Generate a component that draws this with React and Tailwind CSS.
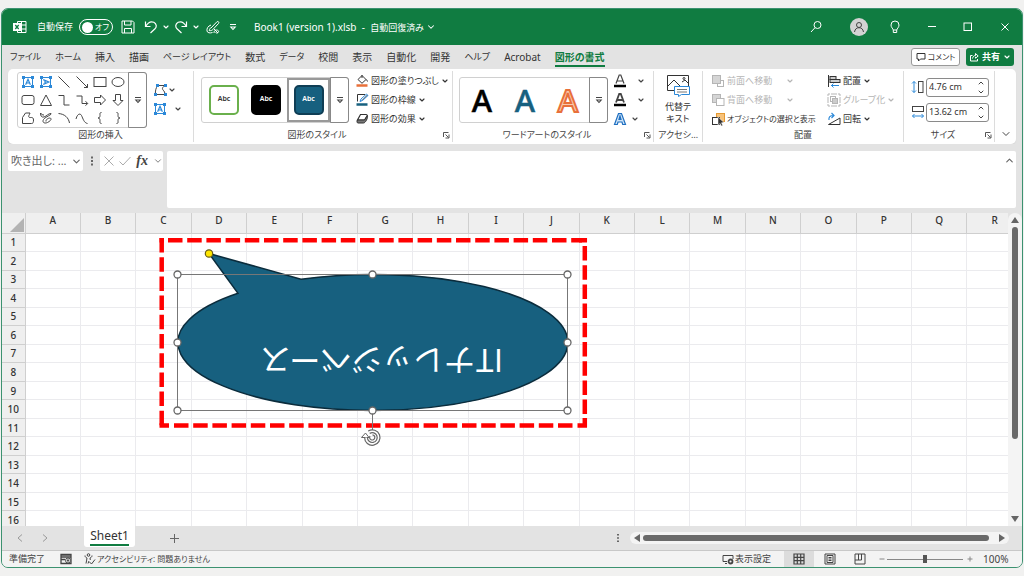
import React from "react";
import { ChevronDown, ChevronUp } from "lucide-react";

const COLS = "ABCDEFGHIJKLMNOPQR".split("");
const ROWS = Array.from({ length: 16 }, (_, i) => i + 1);

function Svg({ w = 14, h = 14, children, label }) {
  return (
    <svg width={w} height={h} viewBox={`0 0 ${w} ${h}`} fill="none" stroke="currentColor" strokeWidth="1" className="shrink-0" aria-label={label} aria-hidden={label ? undefined : true}>
      {children}
    </svg>
  );
}

const Chev = ({ className = "" }) => <ChevronDown size={8} strokeWidth={3.5} className={`shrink-0 ${className}`} />;

function MoreMark() {
  return (
    <Svg w={8} h={8}>
      <path d="M1 1.500h6M1.800 4h4.400L4 6.500z" strokeWidth="1.100" />
    </Svg>
  );
}

function Launcher() {
  return (
    <button aria-label="詳細設定" className="flex h-3 w-3 items-center justify-center text-[#555]">
      <Svg w={8} h={8}>
        <path d="M1.500 6V1.500H6.500M3.500 3.500l3 3M7 3.500V7H3.500" />
      </Svg>
    </button>
  );
}

/* ---------- title bar ---------- */

function TitleBar() {
  return (
    <header className="flex h-9 shrink-0 items-center bg-[#107c41] pl-[11px] text-[10px] text-white">
      <Svg w={14} h={14} label="Excel">
        <path d="M4.500 3.500v-2h8.500v11h-8.500v-2M8.500 1.500v11M8.500 5h4.500M8.500 9h4.500" />
        <rect x="0.500" y="3.500" width="7" height="7" fill="#fff" stroke="#fff" />
        <path d="M2.300 5l3.400 4M5.700 5L2.300 9" stroke="#107c41" strokeWidth="1.300" />
      </Svg>
      <label className="ml-[10px] flex items-center gap-1">
        <span className="w-[38px] whitespace-nowrap text-[9px]">自動保存</span>
        <span className="relative flex h-4 w-[34px] items-center rounded-full border border-white px-[2px]">
          <input type="checkbox" role="switch" className="absolute inset-0 h-full w-full cursor-pointer appearance-none" />
          <span className="h-[11px] w-[11px] shrink-0 rounded-full bg-white" />
          <span className="ml-[2px] text-[8px] whitespace-nowrap">オフ</span>
        </span>
      </label>
      <button aria-label="上書き保存" className="ml-2">
        <Svg>
          <path d="M1 1h10.500l1.500 1.500V13H1zM3.500 1v4h6.500V1M3.500 13V8.500h7V13" />
        </Svg>
      </button>
      <button aria-label="元に戻す" className="ml-[9px] flex items-center gap-1">
        <Svg>
          <path d="M1.500 1.500v5h5M1.800 6.200C4 2.500 7 1 9.800 2.300c3 1.500 3 4.700 1.200 6.500L6.500 13" strokeWidth="1.200" />
        </Svg>
        <Chev />
      </button>
      <button aria-label="やり直し" className="ml-1 flex items-center gap-1">
        <Svg>
          <path d="M12.500 1.500v5h-5M12.200 6.200C10 2.500 7 1 4.200 2.300c-3 1.500-3 4.700-1.200 6.500L7.500 13" strokeWidth="1.200" />
        </Svg>
        <Chev />
      </button>
      <button aria-label="インク" className="ml-[6px]">
        <Svg>
          <path d="M5 8l6-6.300c1-.8 2.500.6 1.600 1.700L6.800 9.600M5 8c-1.200.2-1.500 1.200-1.800 2.600 1.500.2 3-.1 3.600-1M5 5C2 6 .5 8.500 1 11c.4 2 3 2.300 5.500 1.500M8 9l4 4M8 13c0-2 1-3 2.500-3s2.500 1 2 2-2 1.500-3 .5" />
        </Svg>
      </button>
      <button aria-label="クイック アクセスのカスタマイズ" className="ml-[9px]">
        <MoreMark />
      </button>
      <button className="ml-[17px] flex items-center whitespace-nowrap text-[10px]">
        <span>Book1 (version 1).xlsb&nbsp; -&nbsp; <span className="text-[9px]">自動回復済み</span></span>
        <ChevronDown size={10} strokeWidth={2.5} className="ml-[2px]" />
      </button>
      <div className="ml-auto flex items-center">
        <button aria-label="検索">
          <Svg>
            <circle cx="8.500" cy="5" r="3.500" />
            <path d="M6 7.700L2 12" />
          </Svg>
        </button>
        <button aria-label="アカウント" className="ml-[27px] flex h-[18px] w-[18px] items-center justify-center rounded-full bg-[#d3d3d3] text-[#444]">
          <Svg w={12} h={12}>
            <circle cx="6" cy="4" r="2.500" />
            <path d="M1.500 11c.5-3 2.200-4.300 4.500-4.300s4 1.300 4.500 4.300" />
          </Svg>
        </button>
        <button aria-label="ヒント" className="ml-5">
          <Svg>
            <path d="M5.300 10C5 8.500 3 7.500 3 5a4 4 0 0 1 8 0c0 2.500-2 3.500-2.300 5zM5.300 10v2.500h3.400V10" />
          </Svg>
        </button>
        <button aria-label="最小化" className="ml-[23px]">
          <Svg><path d="M3 6.500h8" /></Svg>
        </button>
        <button aria-label="最大化" className="ml-[22px]">
          <Svg><rect x="3" y="3" width="7.500" height="7.500" /></Svg>
        </button>
        <button aria-label="閉じる" className="mr-[10px] ml-[23px]">
          <Svg><path d="M3.500 3.500l7 7M10.500 3.500l-7 7" /></Svg>
        </button>
      </div>
    </header>
  );
}

/* ---------- ribbon tabs ---------- */

const KANA_TAB = "text-[9px]";
const KANJI_TAB = "text-[10px]";
const TABS = [
  ["ファイル", KANA_TAB],
  ["ホーム", KANA_TAB],
  ["挿入", KANJI_TAB],
  ["描画", KANJI_TAB],
  ["ページ レイアウト", KANA_TAB],
  ["数式", KANJI_TAB],
  ["データ", KANA_TAB],
  ["校閲", KANJI_TAB],
  ["表示", KANJI_TAB],
  ["自動化", KANJI_TAB],
  ["開発", KANJI_TAB],
  ["ヘルプ", KANA_TAB],
  ["Acrobat", KANJI_TAB],
];

function Tabs() {
  return (
    <nav className="flex h-6 shrink-0 items-center bg-[#e3e3e3] pr-2 pl-2 text-[10px] text-[#333]">
      <div className="flex items-center gap-[14px]">
        {TABS.map(([name, size]) => (
          <button key={name} className={`leading-4 whitespace-nowrap ${size}`}>{name}</button>
        ))}
        <button className="mt-[2px] border-b-2 border-[#107c41] leading-4 font-bold whitespace-nowrap text-[#107c41]">図形の書式</button>
      </div>
      <button className="ml-auto flex h-[18px] w-[49px] items-center justify-center gap-[2px] rounded-[3px] border border-[#999] bg-white text-[8px] whitespace-nowrap">
        <Svg w={10} h={10}>
          <path d="M1 1.500h8v5.500H4.500L2.500 9V7H1z" />
        </Svg>
        コメント
      </button>
      <button className="ml-[6px] flex h-[18px] w-12 items-center justify-center gap-[3px] rounded-[3px] bg-[#107c41] text-[9px] font-bold whitespace-nowrap text-white">
        <Svg w={10} h={10}>
          <path d="M3.500 3.500H1.500V9h7V7M3.500 6.500C4 4.500 5 3.500 6.500 3.500V1.500L9.200 4 6.500 6.200V4.800" />
        </Svg>
        共有
        <Chev />
      </button>
    </nav>
  );
}

/* ---------- ribbon ---------- */

function Group({ label, launcher, className, children }) {
  return (
    <section className={`flex shrink-0 flex-col border-r border-[#dcdcdc] ${className}`}>
      <div className="flex h-[57px] items-center">{children}</div>
      <div className="flex h-[14px] items-center text-[9px] text-[#444]">
        <span className="flex-1 text-center whitespace-nowrap">{label}</span>
        {launcher && <Launcher />}
      </div>
    </section>
  );
}

const BLUE = "#2b88d8";

const textBox = (turn) => (
  <>
    <rect x="2.500" y="2.500" width="9" height="9" stroke={BLUE} />
    <g fill={BLUE} stroke="none">
      <rect x="1" y="1" width="3" height="3" />
      <rect x="10" y="1" width="3" height="3" />
      <rect x="1" y="10" width="3" height="3" />
      <rect x="10" y="10" width="3" height="3" />
    </g>
    <path d="M4.600 9.800L7 4.200l2.400 5.600M5.500 8h3" stroke={BLUE} strokeWidth="1.200" transform={turn ? "rotate(90 7 7)" : undefined} />
  </>
);

const SHAPES = [
  ["テキスト ボックス", textBox(false)],
  ["縦書きテキスト ボックス", textBox(true)],
  ["直線", <path d="M1.500 1.500l11 11" />],
  ["矢印", <path d="M1.500 1.500l11 11M12.500 9v3.500H9" />],
  ["正方形", <rect x="1" y="2.500" width="12" height="9" />],
  ["楕円", <ellipse cx="7" cy="7" rx="6" ry="4.500" />],
  ["角丸四角形", <rect x="1" y="2.500" width="12" height="9" rx="2" />],
  ["三角形", <path d="M7 2L12.500 12.500H1.500z" />],
  ["カギ線", <path d="M1.500 2.500H7v9.500h5.500" />],
  ["カギ線矢印", <path d="M1.500 3H7v7.500h5.500M10.500 8.200l2.200 2.300-2.200 2.200" />],
  ["右矢印", <path d="M1.500 4.500h6V2l5 5-5 5V9.500h-6z" />],
  ["下矢印", <path d="M4.500 1.500v6H2l5 5 5-5H9.500v-6z" />],
  ["フリーフォーム", <path d="M1.500 12.500V6.500L4.500 2h4.500c-.5 2-2 3-1 4.200C9 7.300 12.500 5 12.500 9c0 2.500-.5 3.500-2 3.500z" />],
  ["フリーハンド", <path d="M1.500 2c0 3 1 4.500 3.500 4C8 5 9 2.500 12 2.500c1.500 1-6 3.500-7.500 6-1.500 2.500.5 4.500 4 3 3-1.500 4.500-3.500 3-4.300S6.500 8.500 7 10.500M1.500 2c1 1.500 2 2 3.500 2" />],
  ["円弧", <path d="M1.500 2.500c6 .5 10 4 11 9.500" />],
  ["曲線", <path d="M1 8C2 3.500 5 1.500 6.500 4.500c1.500 3 2.500 7.500 6 8" />],
  ["左中かっこ", <path d="M8.500 1.500C6.500 1.500 7 3 7 4.500S6.500 7 5 7c1.500 0 2 1 2 2.500S6.500 12.500 8.500 12.500" />],
  ["右中かっこ", <path d="M5.500 1.500C7.500 1.500 7 3 7 4.500S7.500 7 9 7C7.500 7 7 8 7 9.500S7.500 12.500 5.500 12.500" />],
];

function GalleryMore({ className = "" }) {
  return (
    <button aria-label="その他" className={`flex w-[19px] shrink-0 items-center justify-center self-stretch rounded-r-[3px] border border-[#888] ${className}`}>
      <MoreMark />
    </button>
  );
}

function StyleTile({ label, className }) {
  return (
    <button className={`flex h-[30px] w-[30px] items-center justify-center rounded-[5px] border-2 text-[7px] font-semibold ${className}`}>{label}</button>
  );
}

function Command({ icon, children, disabled, chevron = true, gap = "ml-[2px]", size = "text-[9px]" }) {
  return (
    <button disabled={disabled} className={`flex h-[19px] items-center whitespace-nowrap text-[#333] disabled:text-[#b5b5b5] ${size}`}>
      {icon}
      <span className="ml-[2px]">{children}</span>
      {chevron && <Chev className={gap} />}
    </button>
  );
}

function SizeField({ icon, label, value }) {
  return (
    <div className="flex items-center gap-[1px]">
      {icon}
      <div className="flex h-[19px] w-[63px] items-center rounded-[3px] border border-[#8a8a8a] bg-white">
        <input aria-label={label} defaultValue={value} className="w-[50px] min-w-0 bg-transparent pl-[2px] text-[9px] text-[#333] outline-none" />
        <span className="flex flex-col gap-[1px]">
          <button aria-label={`${label}を増やす`}><ChevronUp size={8} strokeWidth={3} /></button>
          <button aria-label={`${label}を減らす`}><ChevronDown size={8} strokeWidth={3} /></button>
        </span>
      </div>
    </div>
  );
}

function Ribbon() {
  return (
    <div className="mx-[6px] flex h-[75px] shrink-0 rounded-[5px] bg-white py-[2px] text-[#444] shadow-[0_1px_1px_#d5d5d5]">
      <Group label="図形の挿入" className="w-[186px]">
        <div className="ml-[9px] flex h-14 rounded-[3px] border border-[#d0d0d0]">
          <div className="grid grid-cols-6 pl-[1px]">
            {SHAPES.map(([name, drawing]) => (
              <button key={name} aria-label={name} className="flex h-[18px] w-[18px] items-center justify-center">
                <Svg>{drawing}</Svg>
              </button>
            ))}
          </div>
          <GalleryMore className="-my-[1px] -mr-[1px] ml-[1px]" />
        </div>
        <div className="ml-[6px] flex flex-col gap-[5px]">
          <button aria-label="図形の編集" className="flex items-center gap-[1px]">
            <Svg>
              <path d="M4.500 2.500h8C9 4 8.500 6 11 8l1.500 3.500H2.500C2 8 3 5 4.500 2.500" />
              <g fill={BLUE} stroke="none">
                <rect x="3" y="1" width="3" height="3" />
                <rect x="11" y="1" width="3" height="3" />
                <rect x="1" y="10" width="3" height="3" />
                <rect x="11" y="10" width="3" height="3" />
              </g>
            </Svg>
            <Chev />
          </button>
          <button aria-label="テキスト ボックスの描画" className="flex items-center gap-[7px]">
            <Svg>{textBox(false)}</Svg>
            <Chev />
          </button>
        </div>
      </Group>

      <Group label="図形のスタイル" launcher className="w-[259px]">
        <div className="ml-[7px] flex h-[46px] items-center rounded-[3px] border border-[#d0d0d0] pl-[7px]">
          <StyleTile label="Abc" className="border-[#6ab04c] bg-white text-[#333]" />
          <StyleTile label="Abc" className="ml-3 border-black bg-black text-white" />
          <span className="ml-[6px] flex h-11 w-[43px] items-center justify-center border-2 border-[#999]">
            <StyleTile label="Abc" className="border-[#0f3e55] bg-[#17607f] text-white" />
          </span>
          <GalleryMore className="-my-[1px] -mr-[1px]" />
        </div>
        <div className="ml-[6px] flex flex-col items-start">
          <Command
            icon={
              <Svg>
                <path d="M3 5.500L7 1.500l4 4-4 3.800zM7 1v3M11.500 5.500l1 2" />
                <path d="M1.500 11.500h11" stroke="#e8703a" strokeWidth="2.500" />
              </Svg>
            }
          >
            図形の塗りつぶし
          </Command>
          <Command
            icon={
              <Svg>
                <path d="M2.500 8.500v-7H10M12.500 2L7 7.500" />
                <path d="M5 8.500l1-2.500 5.500-5 1.500 1.500-5.500 5z" stroke={BLUE} />
                <path d="M1.500 11.500h11" stroke="#17607f" strokeWidth="2.500" />
              </Svg>
            }
          >
            図形の枠線
          </Command>
          <Command
            icon={
              <Svg>
                <path d="M5.500 2.500h5.500c1 0 1.300.8 1 1.500L9.500 8H2.500z" fill="#fff" strokeWidth="1.200" />
                <path d="M2.500 8c-1 1.500-.5 3 .5 3h5.500c2 0 4.500-5 4-7.500L9.500 8z" fill="#777" />
              </Svg>
            }
          >
            図形の効果
          </Command>
        </div>
      </Group>

      <Group label="ワードアートのスタイル" launcher className="w-[201px]">
        <div className="ml-[6px] flex h-[46px] items-center rounded-[3px] border border-[#d0d0d0]">
          {[
            ["黒", "#000", "#000", 0.5],
            ["青", "#17607f", "#17607f", 0.5],
            ["オレンジ", "#f8c9ae", "#e8703a", 2],
          ].map(([name, fill, stroke, width]) => (
            <button key={name} aria-label={name} className="flex h-full w-[43px] items-center justify-center">
              <svg width="40" height="40" viewBox="0 0 40 40">
                <text x="20" y="32" textAnchor="middle" fontSize="31" fontWeight="500" fontFamily="Noto Sans, sans-serif" fill={fill} stroke={stroke} strokeWidth={width}>A</text>
              </svg>
            </button>
          ))}
          <GalleryMore className="-my-[1px] -mr-[1px]" />
        </div>
        <div className="ml-[5px] flex flex-col gap-[5px]">
          {[
            ["文字の塗りつぶし", "#fff", "#444", "#000", "ml-[10px]"],
            ["文字の輪郭", "#ccc", "#444", "#000", "ml-[10px]"],
            ["文字の効果", "#cfe4f7", "#1f6fc0", "none", "ml-1"],
          ].map(([name, fill, stroke, bar, gap]) => (
            <button key={name} aria-label={name} className="flex items-center">
              <Svg>
                <path d={bar === "none" ? "M1.500 12.500L5.500 1.500h3L12.500 12.500h-2.800L9 10H5l-.7 2.500zM6 7.500h2L7 4z" : "M3 9.500L6.200 1h1.600L11 9.500M4.300 7h5.400"} fill={bar === "none" ? fill : "none"} stroke={stroke} strokeWidth={fill === "#ccc" ? 1.8 : 1.2} />
                {bar !== "none" && <path d="M1 12h12" stroke={bar} strokeWidth="2.500" />}
              </Svg>
              <Chev className={gap} />
            </button>
          ))}
        </div>
      </Group>

      <Group label="アクセシ…" className="w-[49px]">
        <button className="flex w-full flex-col items-center text-[9px] leading-3 text-[#333]">
          <Svg w={24} h={23}>
            <path d="M13 16.500H1.500v-15h21V13M2 12l6-6 6 6M16 8l3-2 3 3" />
            <circle cx="18" cy="4.500" r="1" />
            <path d="M8.500 12.500h15v8h-8l-3 2v-2h-4z" fill="#fff" stroke={BLUE} />
            <path d="M11 15.500h10M11 18h10" stroke="#777" />
          </Svg>
          <span className="mt-1">代替テ<br />キスト</span>
        </button>
      </Group>

      <Group label="配置" className="w-[201px]">
        <div className="ml-2 flex w-[116px] flex-col items-start">
          <Command disabled gap="ml-[14px]" icon={<Svg><rect x="6.500" y="6.500" width="6" height="6" /><rect x="1.500" y="1.500" width="8" height="8" fill="#d5d5d5" /></Svg>}>前面へ移動</Command>
          <Command disabled gap="ml-[14px]" icon={<Svg><rect x="1.500" y="1.500" width="8" height="8" fill="#d5d5d5" /><rect x="5.500" y="5.500" width="7.500" height="7" fill="#fff" /></Svg>}>背面へ移動</Command>
          <Command
            chevron={false}
            size="text-[8px]"
            icon={
              <Svg>
                <rect x="5.500" y="1.500" width="8" height="8" fill="#f7c27a" stroke="#e59a33" />
                <rect x="1.500" y="5.500" width="7" height="7" fill="#fff" />
                <path d="M7 5l6 5.500-2.500.3 1.200 2.700-1.400.5-1.200-2.500L7 13z" fill="#333" stroke="#fff" strokeWidth=".5" />
              </Svg>
            }
          >
            オブジェクトの選択と表示
          </Command>
        </div>
        <div className="flex flex-col items-start">
          <Command
            icon={
              <Svg>
                <path d="M1.500 1v12" />
                <rect x="3" y="2.500" width="6" height="3" fill="#ccc" />
                <rect x="3" y="5.500" width="10" height="3" fill="#ccc" />
                <path d="M12 11.500H4M6.500 9.500l-2 2 2 2" stroke={BLUE} />
              </Svg>
            }
          >
            配置
          </Command>
          <Command disabled icon={<Svg><path d="M1 3V1h2M11 1h2v2M13 11v2h-2M3 13H1v-2M4 1h6M4 13h6M1 4v6M13 4v6" /><rect x="3.500" y="3.500" width="5" height="5" /><rect x="5.500" y="5.500" width="5" height="5" fill="#ccc" /></Svg>}>グループ化</Command>
          <Command
            icon={
              <Svg>
                <path d="M1.500 12.500H13V6z" />
                <path d="M2 8C1.500 5 3 3.500 6.500 3.500M4.500 1l2.500 2.500L4.500 6" stroke={BLUE} strokeWidth="1.200" />
              </Svg>
            }
          >
            回転
          </Command>
        </div>
      </Group>

      <Group label="サイズ" launcher className="w-[91px]">
        <div className="ml-[7px] flex flex-col gap-[6px]">
          <SizeField
            label="図形の高さ"
            value="4.76 cm"
            icon={
              <Svg>
                <rect x="7.500" y="1.500" width="4.500" height="11" />
                <path d="M3 1.500v11M1 3.500l2-2 2 2M1 10.500l2 2 2-2" stroke={BLUE} />
              </Svg>
            }
          />
          <SizeField
            label="図形の幅"
            value="13.62 cm"
            icon={
              <Svg>
                <rect x="1.500" y="1.500" width="11" height="5" />
                <path d="M1.500 11h11M3.500 9l-2 2 2 2M10.500 9l2 2-2 2" stroke={BLUE} />
              </Svg>
            }
          />
        </div>
      </Group>
      <div className="flex flex-1 items-end justify-center pb-[2px]">
        <button aria-label="リボンを折りたたむ"><ChevronDown size={12} strokeWidth={2} /></button>
      </div>
    </div>
  );
}

/* ---------- formula bar ---------- */

function FormulaBar() {
  return (
    <div className="flex h-[69px] shrink-0 items-start bg-[#e3e3e3] pt-[7px] pr-[6px] pl-[6px] text-[#666]">
      <div className="flex h-5 w-[75px] items-center rounded-[2px] bg-white">
        <input aria-label="名前ボックス" defaultValue="吹き出し: ..." className="w-[63px] min-w-0 pl-[3px] text-[11px] outline-none" />
        <button aria-label="名前の一覧"><ChevronDown size={11} strokeWidth={2.5} /></button>
      </div>
      <div className="flex h-5 w-[17px] items-center justify-center">
        <Svg w={4} h={12}><path d="M2 1.500v9" strokeWidth="2" strokeDasharray="2 1.500" /></Svg>
      </div>
      <div className="flex h-5 w-[63px] items-center justify-between rounded-[2px] bg-white pl-1">
        <button aria-label="キャンセル" className="text-[#aaa]"><Svg w={10} h={10}><path d="M.5.500l9 9M9.500.500l-9 9" /></Svg></button>
        <button aria-label="入力" className="text-[#aaa]"><Svg w={12} h={10}><path d="M.5 5.500L4 9l7.500-8" /></Svg></button>
        <button aria-label="関数の挿入" className="font-['Liberation_Serif',serif] text-[14px] leading-4 font-bold text-[#444] italic">fx</button>
        <button aria-label="関数の一覧"><ChevronDown size={10} strokeWidth={2} /></button>
      </div>
      <div className="ml-1 flex h-[57px] flex-1 rounded-[2px] bg-white">
        <textarea aria-label="数式バー" className="h-full flex-1 resize-none outline-none" />
        <button aria-label="数式バーの折りたたみ" className="mt-1 mr-[1px] self-start"><ChevronUp size={11} strokeWidth={2.5} /></button>
      </div>
    </div>
  );
}

/* ---------- worksheet ---------- */

const HANDLES = [[177.5, 274.5], [372.5, 274.5], [567.5, 274.5], [177.5, 342.5], [567.5, 342.5], [177.5, 410.5], [372.5, 410.5], [567.5, 410.5]];

function Callout() {
  return (
    <svg className="absolute top-[21px] left-[152px]" width="450" height="220" viewBox="154 234 450 220" role="img" aria-label="吹き出し: 円形">
      <path d="M209 253.500L301 279.200A195 68 0 1 1 238 293.300Z" fill="#17607f" stroke="#0b2c3c" strokeWidth="1.500" />
      <g stroke="#ff0000" strokeWidth="4.500" strokeDasharray="14.500 4.700">
        <path d="M168 240.200H582" />
        <path d="M161.700 238V427" />
        <path d="M584.800 246V414" />
        <path d="M174 425.500H573" />
        <path d="M159.500 425.500H169M159.500 240.200H164M579 240.200H587M584.800 238v4M577.500 425.500H587M584.800 418V427" strokeDasharray="none" />
      </g>
      <text transform="translate(503 349) rotate(180)" fontSize="31" fontFamily="Noto Sans CJK JP, sans-serif" fill="#fff" className="[font-feature-settings:normal]">ITナレッジベース</text>
      <rect x="177.500" y="274.500" width="390" height="136" fill="none" stroke="#777" />
      <path d="M372.500 411v19" stroke="#777" />
      {HANDLES.map(([x, y]) => (
        <circle key={`${x}-${y}`} cx={x} cy={y} r="3.500" fill="#fff" stroke="#666" strokeWidth="1.300" />
      ))}
      <circle cx="209" cy="253.500" r="3.700" fill="#ffe600" stroke="#665c1a" strokeWidth="1.200" />
      <g fill="none">
        <path d="M366 437.500a6.300 6.300 0 1 0 3-5.300" stroke="#666" strokeWidth="4" />
        <path d="M361.500 437.500h7.500l-3.500-4.500z" fill="#fff" stroke="#666" />
        <path d="M366 437.500a6.300 6.300 0 1 0 3-5.300" stroke="#fff" strokeWidth="1.600" />
        <path d="M370 436a2.600 2.600 0 1 0 2.500-1.200" stroke="#666" strokeWidth="1.200" />
      </g>
    </svg>
  );
}

function Sheet() {
  return (
    <div className="flex min-h-0 flex-1 bg-[#e3e3e3]">
      <div className="relative min-w-0 flex-1 overflow-hidden bg-white">
        <table className="h-[317px] w-[1021px] min-w-full table-fixed border-collapse text-[10px] text-[#333]">
          <thead>
            <tr className="h-5 bg-[#efefef]">
              <th aria-label="すべて選択" className="w-[23px] border-r border-b border-[#cfcfcf] p-0 align-bottom">
                <svg width="15" height="15" viewBox="0 0 15 15" className="ml-auto block"><path d="M14 0v14H0z" fill="#b3b3b3" /></svg>
              </th>
              {COLS.map((c) => (
                <th key={c} scope="col" className="border-r border-b border-[#cfcfcf] p-0 pb-[5px] leading-[14px] font-medium">{c}</th>
              ))}
            </tr>
          </thead>
          <tbody>
            {ROWS.map((r) => (
              <tr key={r}>
                <th scope="row" className="border-r border-b border-[#cfcfcf] bg-[#efefef] p-0 leading-[12px] font-medium">{r}</th>
                {COLS.map((c) => (
                  <td key={c} className="border-r border-b border-[#ebebee] p-0" />
                ))}
              </tr>
            ))}
          </tbody>
        </table>
        <Callout />
      </div>
      <div className="flex w-[14px] flex-col items-center rounded-t-full bg-[#f4f4f4] py-1 text-[#666]">
        <button aria-label="上へスクロール"><Svg w={8} h={6}><path d="M4 0l4 6H0z" fill="currentColor" stroke="none" /></Svg></button>
        <div className="mt-1 h-[212px] w-[6px] rounded-full bg-[#6a6a6a]" />
        <button aria-label="下へスクロール" className="mt-auto"><Svg w={8} h={6}><path d="M4 6L0 0h8z" fill="currentColor" stroke="none" /></Svg></button>
      </div>
    </div>
  );
}

/* ---------- footer ---------- */

function SheetTabs() {
  return (
    <div className="flex h-[25px] shrink-0 items-start border-b border-[#c8c8c8] bg-[#e3e3e3] text-[#666]">
      <div className="flex h-6 w-[82px] items-center pl-[15px] text-[#999]">
        <button aria-label="前のシート"><Svg w={6} h={8}><path d="M5 .5L1 4l4 3.500" /></Svg></button>
        <button aria-label="次のシート" className="ml-[19px]"><Svg w={6} h={8}><path d="M1 .5L5 4 1 7.500" /></Svg></button>
      </div>
      <button className="h-[21px] w-[51px] rounded-b-[3px] bg-white px-[6px] text-[#333]">
        <span className="block border-b-2 border-[#107c41] text-[12px] leading-[17px]">Sheet1</span>
      </button>
      <button aria-label="新しいシート" className="ml-[35px] flex h-6 items-center"><Svg w={9} h={9}><path d="M4.500 0v9M0 4.500h9" /></Svg></button>
      <div className="ml-auto flex h-6 items-center">
        <Svg w={4} h={10}><path d="M2 1v8" strokeWidth="2" strokeDasharray="1.500 1.750" /></Svg>
        <div className="mr-[13px] ml-[10px] flex h-3 w-[379px] items-center rounded-full bg-[#f4f4f4] px-1">
          <button aria-label="左へスクロール"><Svg w={6} h={8}><path d="M6 0v8L0 4z" fill="currentColor" stroke="none" /></Svg></button>
          <div className="mr-[10px] ml-[3px] h-[6px] flex-1 rounded-full bg-[#6a6a6a]" />
          <button aria-label="右へスクロール"><Svg w={6} h={8}><path d="M0 0v8l6-4z" fill="currentColor" stroke="none" /></Svg></button>
        </div>
      </div>
    </div>
  );
}

function StatusBar() {
  return (
    <footer className="flex h-4 shrink-0 items-center bg-[#f3f3f3] pl-[7px] text-[9px] whitespace-nowrap text-[#444]">
      <span className="w-[51px]">準備完了</span>
      <Svg w={12} h={12}>
        <path d="M1 2h10M1 4h10M1 1.500h10v9H1zM1 6.500h4" strokeWidth="1.300" />
        <circle cx="8" cy="7.500" r="2.500" fill="#fff" />
        <circle cx="8" cy="7.500" r=".8" fill="#444" />
      </Svg>
      <button className="ml-3 flex items-center gap-[1px] text-[8px]">
        <Svg w={12} h={12}>
          <circle cx="4.500" cy="2" r="1.300" />
          <path d="M1 2.500c0 2 1.500 2 2 2.500 0 2-1 4-1 5.500M8 2.500c0 2-1.500 2-2 2.500l.3 2M4 10.500L5 8M5.500 9l2 2L11 6.500" />
        </Svg>
        アクセシビリティ: 問題ありません
      </button>
      <div className="ml-auto flex h-full items-center">
        <button className="flex items-center gap-[1px]">
          <Svg w={12} h={12}>
            <path d="M5 8.500H1v-6h10V6M3 10.500h2" />
            <circle cx="8.500" cy="8.500" r="2" strokeWidth="1.800" />
          </Svg>
          表示設定
        </button>
        <button aria-label="標準" className="ml-[13px] flex h-full w-[30px] items-center justify-center bg-[#dcdcdc]">
          <Svg w={12} h={12}><path d="M1 1h10v10H1zM4.300 1v10M7.700 1v10M1 4.300h10M1 7.700h10" strokeWidth="1.200" /></Svg>
        </button>
        <button aria-label="ページ レイアウト表示" className="flex h-full w-[31px] items-center justify-center">
          <Svg w={12} h={12}><path d="M1 1h10v10H1zM3 2.500h6v7H3zM4.500 4.500h3M4.500 6h3M4.500 7.500h3" /></Svg>
        </button>
        <button aria-label="改ページ プレビュー" className="flex h-full w-[30px] items-center justify-center">
          <Svg w={12} h={12}><path d="M1 1h10v10H1zM1 7h6.500V1M4.500 1v6" /></Svg>
        </button>
        <button aria-label="縮小" className="ml-1 w-2 text-[#888]"><Svg w={6} h={6}><path d="M.5 3h5" /></Svg></button>
        <input
          type="range"
          aria-label="ズーム"
          min="0"
          max="100"
          defaultValue="50"
          className="h-3 w-[76px] appearance-none bg-transparent [&::-webkit-slider-runnable-track]:h-px [&::-webkit-slider-runnable-track]:bg-[#888] [&::-webkit-slider-thumb]:-mt-1 [&::-webkit-slider-thumb]:h-2 [&::-webkit-slider-thumb]:w-1 [&::-webkit-slider-thumb]:appearance-none [&::-webkit-slider-thumb]:bg-[#555]"
        />
        <button aria-label="拡大" className="ml-1 text-[#888]"><Svg w={6} h={6}><path d="M.5 3h5M3 .5v5" /></Svg></button>
        <span className="mr-[12px] ml-[10px] w-[27px] text-[10px]">100%</span>
      </div>
    </footer>
  );
}

export default function App() {
  return (
    <div className="flex h-screen flex-col bg-[#f1f1f0] px-px pt-2 pb-2 font-['Noto_Sans','Noto_Sans_CJK_JP',sans-serif] [font-feature-settings:'palt']">
      <main className="flex min-h-0 flex-1 flex-col overflow-hidden rounded-[7px] border border-[#3c9270] bg-[#e3e3e3]">
        <TitleBar />
        <Tabs />
        <Ribbon />
        <FormulaBar />
        <Sheet />
        <SheetTabs />
        <StatusBar />
      </main>
    </div>
  );
}
